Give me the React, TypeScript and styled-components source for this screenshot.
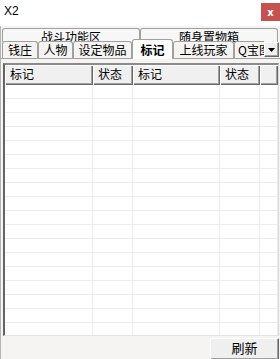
import React from "react";
import styled, { createGlobalStyle } from "styled-components";

const GlobalStyle = createGlobalStyle`
  html, body {
    margin: 0;
    padding: 0;
    background: #ffffff;
  }
  * {
    box-sizing: border-box;
  }
`;

const cjk = `"Noto Sans CJK SC", "Noto Sans", sans-serif`;

const Window = styled.div`
  width: 280px;
  height: 359px;
  overflow: hidden;
  display: flex;
  flex-direction: column;
  font-family: ${cjk};
  font-size: 12px;
  color: #000;
`;

const TitleBar = styled.div`
  height: 26px;
  flex: none;
  background: #ffffff;
  display: flex;
  align-items: flex-start;
  justify-content: space-between;
`;

const Title = styled.span`
  font-family: "Liberation Sans", sans-serif;
  font-size: 12px;
  line-height: 14px;
  padding: 4px 0 0 4px;
`;

const CloseButton = styled.div`
  width: 19px;
  height: 18px;
  margin-top: 3px;
  background: #c75050;
  color: #fff;
  font-family: "DejaVu Sans", sans-serif;
  font-weight: bold;
  font-size: 10px;
  display: flex;
  align-items: center;
  justify-content: center;
`;

const Body = styled.div`
  flex: 1;
  display: flex;
  flex-direction: column;
  background: #f5f4f2;
  border-left: 1px solid #b4b4b4;
  padding-top: 2px;
`;

const TopRow = styled.div`
  display: flex;
  padding-left: 1px;
  height: 14px;
`;

const TopTab = styled.div<{ $w: number }>`
  width: ${(p) => p.$w}px;
  height: 14px;
  border: 1px solid #a0a0a0;
  border-bottom: none;
  border-radius: 3px 3px 0 0;
  background: #f7f7f7;
  text-align: center;
  line-height: 15px;
  padding-top: 0;
  overflow: hidden;
`;

const TabRow = styled.div`
  display: flex;
  height: 17px;
  margin-top: -1px;
  padding-left: 1px;
  position: relative;
  z-index: 1;
`;

const Tab = styled.div<{ $w: number; $active?: boolean }>`
  width: ${(p) => p.$w}px;
  height: ${(p) => (p.$active ? 20 : 17)}px;
  margin-top: ${(p) => (p.$active ? -2 : 0)}px;
  border: 1px solid #a0a0a0;
  border-bottom: none;
  border-radius: 3px 3px 0 0;
  background: ${(p) => (p.$active ? "#fcfcfc" : "#f5f4f2")};
  font-weight: ${(p) => (p.$active ? "bold" : "normal")};
  line-height: ${(p) => (p.$active ? 19 : 15)}px;
  text-align: center;
  white-space: nowrap;
  overflow: hidden;
  position: relative;
  z-index: ${(p) => (p.$active ? 2 : 1)};
`;

const ClippedTab = styled(Tab)`
  text-align: left;
  padding-left: 3px;
  border-right: none;
  border-radius: 3px 0 0 0;
`;

const ScrollButton = styled.div`
  width: 15px;
  height: 15px;
  margin-top: 1px;
  background: #f0f0f0;
  border: 1px solid;
  border-color: #ffffff #696969 #696969 #ffffff;
  box-shadow: inset -1px -1px #a0a0a0;
  display: flex;
  align-items: center;
  justify-content: center;
  position: relative;
  z-index: 3;
`;

const Panel = styled.div`
  flex: 1;
  display: flex;
  flex-direction: column;
  border-top: 1px solid #a0a0a0;
  padding: 4px 1px 0 2px;
  min-height: 0;
`;

const ListView = styled.div`
  height: 273px;
  flex: none;
  background: #ffffff;
  border-style: solid;
  border-width: 2px 1px 1px 2px;
  border-color: #8a8a8a #d8d8d8 #e3e3e3 #646464;
  overflow: hidden;
`;

const columns = "88px 40px 87px 40px 1fr";

const HeaderRow = styled.div`
  display: grid;
  grid-template-columns: ${columns};
  height: 20px;
`;

const HeaderCell = styled.div`
  background: #f0f0f0;
  box-shadow: inset 1px 1px #ffffff, inset -1px -1px #696969, inset -2px -2px #a0a0a0;
  padding-left: 5px;
  line-height: 18px;
  white-space: nowrap;
  overflow: hidden;
`;

const Row = styled.div`
  display: grid;
  grid-template-columns: ${columns};
  height: 14px;
`;

const Cell = styled.div`
  border-right: 1px solid #ececec;
  border-bottom: 1px solid #ececec;
`;

const Footer = styled.div`
  height: 23px;
  flex: none;
  display: flex;
  justify-content: flex-end;
  padding-top: 2px;
`;

const Button = styled.div`
  width: 69px;
  height: 22px;
  background: #efefef;
  border: 1px solid;
  border-color: #ffffff #696969 #696969 #ffffff;
  box-shadow: inset -1px -1px #a0a0a0;
  text-align: center;
  line-height: 18px;
  font-size: 13px;
`;

const headers = ["标记", "状态", "标记", "状态", ""];

export default function App() {
  const rows = Array.from({ length: 18 });
  return (
    <>
      <GlobalStyle />
      <Window>
        <TitleBar>
          <Title>X2</Title>
          <CloseButton>x</CloseButton>
        </TitleBar>
        <Body>
          <TopRow>
            <TopTab $w={138}>战斗功能区</TopTab>
            <TopTab $w={138}>随身置物箱</TopTab>
          </TopRow>
          <TabRow>
            <Tab $w={36}>钱庄</Tab>
            <Tab $w={35}>人物</Tab>
            <Tab $w={59}>设定物品</Tab>
            <Tab $w={41} $active>
              标记
            </Tab>
            <Tab $w={61}>上线玩家</Tab>
            <ClippedTab $w={30}>Q宝图</ClippedTab>
            <ScrollButton>
              <svg width="7" height="4" viewBox="0 0 7 4">
                <polygon points="0,0 7,0 3.5,4" fill="#000" />
              </svg>
            </ScrollButton>
          </TabRow>
          <Panel>
            <ListView>
              <HeaderRow>
                {headers.map((h, i) => (
                  <HeaderCell key={i}>{h}</HeaderCell>
                ))}
              </HeaderRow>
              {rows.map((_, r) => (
                <Row key={r}>
                  {headers.map((_, c) => (
                    <Cell key={c} />
                  ))}
                </Row>
              ))}
            </ListView>
            <Footer>
              <Button>刷新</Button>
            </Footer>
          </Panel>
        </Body>
      </Window>
    </>
  );
}
